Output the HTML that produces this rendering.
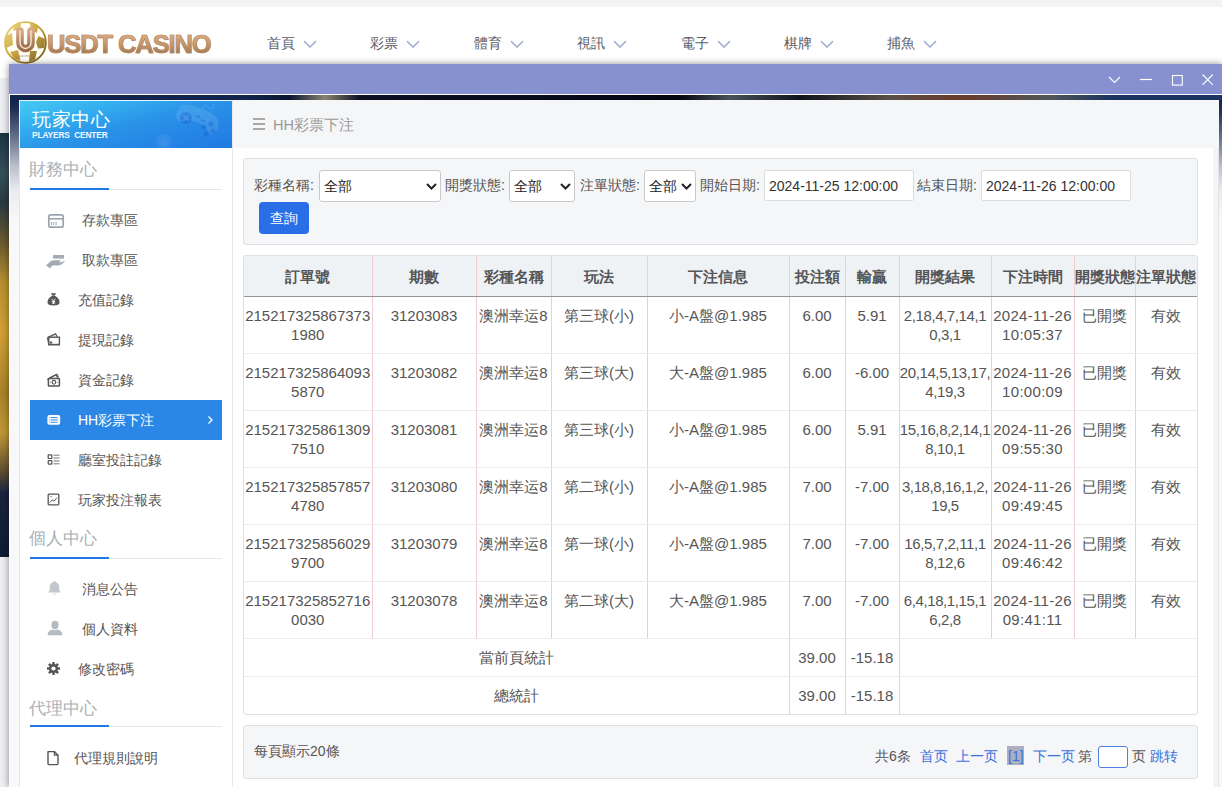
<!DOCTYPE html>
<html><head><meta charset="utf-8">
<style>
*{margin:0;padding:0;box-sizing:border-box}
html,body{width:1222px;height:787px;overflow:hidden;background:#fff;font-family:"Liberation Sans",sans-serif;color:#555}
.abs{position:absolute}
#topstrip{left:0;top:0;width:1222px;height:7px;background:#f3f3f3}
#leftpage{left:0;top:78px;width:9px;height:709px;background:#edeff2}
#casino{left:0;top:133px;width:9px;height:424px;background:linear-gradient(180deg,#1c3444 0px,#36505a 40px,#2a3a40 70px,#6a5a30 110px,#b89030 150px,#d0a035 200px,#a88228 260px,#c09838 300px,#5a4a30 340px,#1a2440 360px,#0f1b33 424px)}
.nav{top:34px;font-size:14px;color:#5c5c66;line-height:18px}
.nav svg{position:absolute;top:6px}
#logo{left:4px;top:21px;width:43px;height:43px}
#logotext{left:47px;top:29px;font-size:25.5px;font-weight:bold;letter-spacing:-1.1px;line-height:30px;-webkit-text-stroke:0.7px #b88a62;background:linear-gradient(180deg,#e2b890 0%,#cc9c72 45%,#a47b55 80%,#9a7450 100%);-webkit-background-clip:text;background-clip:text;color:transparent}
#modal{left:9px;top:64px;width:1213px;height:723px;box-shadow:0 0 7px rgba(0,0,0,.45)}
#titlebar{left:0;top:0;width:1213px;height:30px;background:#8791cf}
#modalbg{left:0;top:30px;width:1213px;height:693px;border-top:1px solid #fff;border-left:1px solid #fff;background:linear-gradient(180deg,#0f1f45 0px,#1e2d55 14px,#6d7690 45px,#b9bdca 70px,#e9ebef 95px,#f8f8fa 125px,#f8f8fa 100%)}
#band{left:10px;top:95px;width:1212px;height:5px;background:linear-gradient(90deg,#10244e 0px,#10244e 240px,#0a1530 280px,#8a8470 315px,#0c1024 350px,#06081a 600px,#05060f 670px,#4a525a 720px,#10141c 790px,#5a5048 880px,#6a3a2a 950px,#50565a 1040px,#1a3560 1100px,#1a3560 1212px)}
#panel{left:19px;top:100px;width:1200px;height:687px;background:#fff}
#sidebar{left:19px;top:100px;width:214px;height:687px;background:#fff;border-left:1px solid #e3e6ea;border-right:1px solid #e6e8ec}
#sbhead{left:19px;top:100px;width:213px;height:48px;border-top:1px solid #e8f4fb;border-left:1px solid #e8f4fb;background:linear-gradient(165deg,#45caf3 0%,#35b0ef 25%,#2a94e8 50%,#2688e6 70%,#217ae2 100%)}
.sbtitle{left:29px;font-size:17px;color:#a9b0b9;line-height:20px}
.uline{left:30px;width:192px;height:1px;background:#e3e5e8}
.uline i{position:absolute;left:0;top:-1px;width:79px;height:2px;background:#1f78e4}
.item{font-size:14px;line-height:16px;color:#555}
.ico{position:absolute}
#active{left:30px;top:400px;width:192px;height:40px;background:#2b87e5}
#crumb{left:232px;top:100px;width:987px;height:48px;background:#f5f6f8}
#rstrip{left:1213px;top:148px;width:6px;height:639px;background:#f3f4f6;border-right:1px solid #e2e4e8}
#filter{left:243px;top:158px;width:955px;height:87px;background:#f5f6f8;border:1px solid #dcdfe4;border-radius:3px}
.lbl{font-size:14px;color:#555;line-height:16px;top:177px}
.sel{top:170px;height:32px;background:#fff;border:1px solid #c9c9c9;border-radius:3px;font-size:14px;color:#222}
.sel span{position:absolute;left:4px;top:7px;line-height:16px}
.sel svg{position:absolute;top:12px}
.inp{top:170px;height:31px;background:#fff;border:1px solid #dcdcdc;border-radius:2px;font-size:14px;color:#333}
.inp span{position:absolute;left:4px;top:7px;line-height:16px}
#btn{left:259px;top:202px;width:50px;height:32px;background:#2a6ee7;border-radius:4px;color:#fff;font-size:14px;line-height:32px;text-align:center}
#tablewrap{left:243px;top:255px;width:955px;height:460px;border:1px solid #dcdfe4;border-radius:3px;overflow:hidden}
table{border-collapse:collapse;table-layout:fixed;position:absolute;left:0;top:0;width:953px}
th{background:#eff2f5;height:40px;font-size:15px;font-weight:bold;color:#555;border-left:1px solid #f2cdd0;border-bottom:1.5px solid #9c9293;white-space:nowrap;overflow:visible;padding:4px 0 0 0;text-align:center}
td{font-size:15px;color:#555;text-align:center;vertical-align:top;border-left:1px solid #f2cdd0;border-bottom:1px solid #ebebeb;padding:9px 0 0 0;line-height:19px;white-space:nowrap;height:57px}
th:first-child,td:first-child{border-left:none}
tr.sum td{height:38px;vertical-align:middle;padding:1px 0 0 0}
td.c8{letter-spacing:-0.4px}
td.c1{letter-spacing:0px}
td.c9{letter-spacing:0.3px}
#pager{left:243px;top:725px;width:955px;height:54px;background:#f5f6f8;border:1px solid #dcdfe4;border-radius:3px}
.pg{font-size:14px;line-height:16px;top:748px;color:#555}
.blue{color:#3b6fe0}
</style></head><body>
<div class="abs" id="topstrip"></div>
<div class="abs" id="leftpage"></div>
<div class="abs" id="casino"></div>

<!-- logo -->
<svg class="abs" id="logo" viewBox="0 0 43 43">
 <defs><linearGradient id="gold" x1="0" y1="0" x2="1" y2="1"><stop offset="0" stop-color="#f0d878"/><stop offset=".45" stop-color="#c9a230"/><stop offset="1" stop-color="#6a5010"/></linearGradient>
 <linearGradient id="ug" x1="0" y1="0" x2="0" y2="1"><stop offset="0" stop-color="#d8a684"/><stop offset="1" stop-color="#9c6e4a"/></linearGradient></defs>
 <circle cx="21.5" cy="21.5" r="20.4" fill="#fffef8" stroke="url(#gold)" stroke-width="1.8"/>
 <path d="M9 4.5 L17 2.5 L16 8 L9.5 10 Z M26 2 L34 5 L33 12 L27 9 Z M1.5 15 L8 12 L9 24 L2 27 Z M34.5 15 L41 18 L40.5 27 L34 27.5 L32 21 Z M6 31 L14 29 L16.5 39.5 L10 38 Z M26 30 L33 30 L31 38.5 L25 40.5 Z" fill="url(#gold)" opacity=".9"/>
 <path d="M16 10 V22 A5.5 5.5 0 0 0 27 22 V10" fill="none" stroke="url(#ug)" stroke-width="7.6" stroke-linecap="round"/>
 <path d="M16 10 V22 A5.5 5.5 0 0 0 27 22 V10" fill="none" stroke="#fbeee0" stroke-width="1.3" stroke-linecap="round"/>
 <text x="20" y="36" font-size="4.2" text-anchor="middle" fill="#b08a6a" font-family="Liberation Sans">casino</text>
</svg>
<div class="abs" id="logotext">USDT CASINO</div>

<!-- nav -->
<div class="abs nav" style="left:267px">首頁<svg style="left:35.5px" width="14" height="9" viewBox="0 0 14 9"><path d="M1 1.2 L7 7 L13 1.2" fill="none" stroke="#aab3d3" stroke-width="1.7"/></svg></div>
<div class="abs nav" style="left:370px">彩票<svg style="left:35.5px" width="14" height="9" viewBox="0 0 14 9"><path d="M1 1.2 L7 7 L13 1.2" fill="none" stroke="#aab3d3" stroke-width="1.7"/></svg></div>
<div class="abs nav" style="left:474px">體育<svg style="left:35.5px" width="14" height="9" viewBox="0 0 14 9"><path d="M1 1.2 L7 7 L13 1.2" fill="none" stroke="#aab3d3" stroke-width="1.7"/></svg></div>
<div class="abs nav" style="left:577px">視訊<svg style="left:35.5px" width="14" height="9" viewBox="0 0 14 9"><path d="M1 1.2 L7 7 L13 1.2" fill="none" stroke="#aab3d3" stroke-width="1.7"/></svg></div>
<div class="abs nav" style="left:681px">電子<svg style="left:35.5px" width="14" height="9" viewBox="0 0 14 9"><path d="M1 1.2 L7 7 L13 1.2" fill="none" stroke="#aab3d3" stroke-width="1.7"/></svg></div>
<div class="abs nav" style="left:784px">棋牌<svg style="left:35.5px" width="14" height="9" viewBox="0 0 14 9"><path d="M1 1.2 L7 7 L13 1.2" fill="none" stroke="#aab3d3" stroke-width="1.7"/></svg></div>
<div class="abs nav" style="left:887px">捕魚<svg style="left:35.5px" width="14" height="9" viewBox="0 0 14 9"><path d="M1 1.2 L7 7 L13 1.2" fill="none" stroke="#aab3d3" stroke-width="1.7"/></svg></div>

<!-- modal -->
<div class="abs" id="modal">
 <div class="abs" id="titlebar"></div>
 <div class="abs" id="modalbg"></div>
</div>
<svg class="abs" style="left:1100px;top:70px" width="122" height="22" viewBox="0 0 122 22">
 <path d="M9 7 L14.5 12.5 L20 7" fill="none" stroke="#fff" stroke-width="1.1"/>
 <path d="M40 9.5 H52" stroke="#fff" stroke-width="1.2"/>
 <rect x="72.5" y="5.5" width="9.8" height="9.6" fill="none" stroke="#fff" stroke-width="1.1"/>
 <path d="M102.5 4.5 L112.8 14.8 M112.8 4.5 L102.5 14.8" stroke="#fff" stroke-width="1.1"/>
</svg>

<div class="abs" id="band"></div>
<div class="abs" id="panel"></div>
<div class="abs" id="crumb"></div>
<div class="abs" id="rstrip"></div>

<!-- sidebar -->
<div class="abs" id="sidebar"></div>
<div class="abs" id="sbhead"></div>
<svg class="abs" style="left:150px;top:101px" width="82" height="47" viewBox="0 0 82 47">
 <g transform="translate(48 18) rotate(22) scale(0.82) translate(-47 -20)">
  <path d="M22 12 Q30 6 47 7 Q64 6 71 13 Q76 22 72 29 Q68 33 62 28 Q56 24 47 24 Q38 24 32 28 Q26 33 22 29 Q18 22 22 12 Z" fill="rgba(255,255,255,0.11)"/>
 </g>
 <circle cx="36" cy="17" r="6" fill="rgba(20,90,210,0.35)"/>
 <path d="M33 14 L39 20 M39 14 L33 20" stroke="rgba(255,255,255,0.15)" stroke-width="1.6"/>
 <path d="M46 14.5 L50 16.5 M51 18.5 L55 20.5" stroke="rgba(20,90,210,0.35)" stroke-width="1.6"/>
 <circle cx="54" cy="26" r="2.6" fill="rgba(20,90,210,0.35)"/>
 <circle cx="61" cy="23" r="2.6" fill="rgba(20,90,210,0.35)"/>
 <circle cx="56" cy="33" r="2.6" fill="rgba(20,90,210,0.35)"/>
 <circle cx="63" cy="30" r="2.6" fill="rgba(20,90,210,0.35)"/>
 <path d="M52 8 Q55 2 58 6 Q61 10 64 6 L62 2" fill="none" stroke="rgba(255,255,255,0.12)" stroke-width="1.2"/>
 <circle cx="14" cy="41" r="8" fill="rgba(255,255,255,0.06)"/>
 <circle cx="14" cy="42" r="4" fill="rgba(255,255,255,0.05)"/>
</svg>
<div class="abs" style="left:32px;top:109px;font-size:18.5px;color:#fff;line-height:21px;letter-spacing:0.5px">玩家中心</div>
<div class="abs" style="left:32px;top:130px;font-size:8.3px;font-weight:bold;color:#f4f9ff;line-height:10px;letter-spacing:-0.1px">PLAYERS&nbsp; CENTER</div>

<div class="abs sbtitle" style="top:160px">財務中心</div>
<div class="abs uline" style="top:189px"><i></i></div>

<div class="abs item" style="left:82px;top:212px">存款專區</div>
<div class="abs item" style="left:82px;top:252px">取款專區</div>
<div class="abs item" style="left:78px;top:292px">充值記錄</div>
<div class="abs item" style="left:78px;top:332px">提現記錄</div>
<div class="abs item" style="left:78px;top:372px">資金記錄</div>
<div class="abs" id="active"></div>
<div class="abs item" style="left:78px;top:412px;color:#fff">HH彩票下注</div>
<div class="abs item" style="left:78px;top:452px">廳室投註記錄</div>
<div class="abs item" style="left:78px;top:492px">玩家投注報表</div>

<div class="abs sbtitle" style="top:529px">個人中心</div>
<div class="abs uline" style="top:558px"><i></i></div>
<div class="abs item" style="left:82px;top:581px">消息公告</div>
<div class="abs item" style="left:82px;top:621px">個人資料</div>
<div class="abs item" style="left:78px;top:661px">修改密碼</div>

<div class="abs sbtitle" style="top:699px">代理中心</div>
<div class="abs uline" style="top:726px"><i></i></div>
<div class="abs item" style="left:74px;top:750px">代理規則說明</div>


<!-- sidebar icons -->
<svg class="abs" style="left:47px;top:213px" width="18" height="16" viewBox="0 0 18 16"><rect x="1.8" y="1.8" width="14.4" height="12.4" rx="2" fill="none" stroke="#9ca5ae" stroke-width="1.7"/><path d="M1.8 5.8 H16.2" stroke="#9ca5ae" stroke-width="1.6"/><path d="M4.5 9 V12 M6.8 9 V12 M9.1 9 V12" stroke="#9ca5ae" stroke-width="1"/></svg>
<svg class="abs" style="left:46px;top:254px" width="20" height="15" viewBox="0 0 20 15"><rect x="7" y="1" width="11" height="3.6" fill="#a2abb3"/><path d="M1 10.8 L4.2 7.6 Q6 6.2 8.5 6.2 H13.6 Q15 6.4 14.2 7.8 Q13.6 8.5 12 8.5 H9.6 H13.5 Q16.5 8.3 18.8 6.4 Q19 7.5 16.8 9.6 Q14.5 11.6 11.5 11.6 H6.2 L4.8 13.6 Z" fill="#a2abb3"/><path d="M0.6 10.6 L4.6 13.9" stroke="#a2abb3" stroke-width="1.6"/></svg>
<svg class="abs" style="left:46px;top:292px" width="15" height="15" viewBox="0 0 15 15"><path d="M5 1.2 H10 L8.8 3.5 H6.2 Z" fill="#555"/><path d="M6 3.8 H9 Q13.5 6.5 13.5 10.2 Q13.5 13.5 7.5 13.5 Q1.5 13.5 1.5 10.2 Q1.5 6.5 6 3.8 Z" fill="#555"/><path d="M5.6 6.8 L7.5 9 L9.4 6.8 M7.5 9 V12 M5.8 9.6 H9.2 M5.8 11 H9.2" fill="none" stroke="#fff" stroke-width="0.9"/></svg>
<svg class="abs" style="left:46px;top:332px" width="15" height="15" viewBox="0 0 15 15"><path d="M1.5 5.6 L9.5 1.8 L11.2 4.8" fill="none" stroke="#555" stroke-width="1.3"/><rect x="2.8" y="5.2" width="10.6" height="7.6" fill="none" stroke="#555" stroke-width="1.4"/><path d="M1.5 5.6 L2.8 12.8" stroke="#555" stroke-width="1.2"/><rect x="4" y="9.5" width="2.2" height="2" fill="#555"/><path d="M4 12.3 H13" stroke="#555" stroke-width="1"/></svg>
<svg class="abs" style="left:46px;top:373px" width="15" height="15" viewBox="0 0 15 15"><path d="M1.4 6.6 L10 1.8 L11.8 5" fill="none" stroke="#555" stroke-width="1.3"/><path d="M3.2 4.9 L11 1 L12.6 4" fill="none" stroke="#555" stroke-width="1"/><rect x="2.4" y="5.6" width="11" height="7.4" rx=".6" fill="none" stroke="#555" stroke-width="1.5"/><ellipse cx="7.9" cy="9.3" rx="1.8" ry="1.9" fill="none" stroke="#555" stroke-width="1.1"/><path d="M4.2 9.3 H5 M10.8 9.3 H11.6" stroke="#555" stroke-width="1.1"/></svg>
<svg class="abs" style="left:47px;top:414px" width="14" height="12" viewBox="0 0 14 12"><rect x="0.4" y="1" width="12.8" height="9.8" rx="2" fill="#fff"/><path d="M3.6 3.6 H10.6 M3.6 5.9 H10.6 M3.6 8.2 H10.6" stroke="#2b87e5" stroke-width="1"/><path d="M1.9 3.6 H2.6 M1.9 5.9 H2.6 M1.9 8.2 H2.6" stroke="#2b87e5" stroke-width="1"/></svg>
<svg class="abs" style="left:47px;top:454px" width="14" height="12" viewBox="0 0 14 12"><rect x="1.2" y="0.9" width="3.6" height="3.6" rx=".6" fill="none" stroke="#555" stroke-width="1.2"/><rect x="1.2" y="6.6" width="3.6" height="3.6" rx=".6" fill="none" stroke="#555" stroke-width="1.2"/><path d="M6.4 1.2 H12.5 M6.4 4 H12.5 M6.4 7 H12.5 M6.4 9.8 H12.5" stroke="#777" stroke-width="1"/></svg>
<svg class="abs" style="left:47px;top:493px" width="13" height="13" viewBox="0 0 13 13"><rect x="1.2" y="1.2" width="10.6" height="10.6" rx=".8" fill="none" stroke="#555" stroke-width="1.3"/><path d="M3 9.6 L5.2 6.8 L7 8.2 L10 4.6 M3.6 3 L4.6 4.2" fill="none" stroke="#555" stroke-width="1"/></svg>
<svg class="abs" style="left:46px;top:580px" width="17" height="16" viewBox="0 0 17 16"><path d="M8.5 1 Q9.6 1 9.7 2.2 Q13 3 13.2 6.8 V10.2 L15 12.4 H2 L3.8 10.2 V6.8 Q4 3 7.3 2.2 Q7.4 1 8.5 1 Z" fill="#c3c8ce"/><path d="M7 13.6 Q8.5 15.6 10 13.6 Z" fill="#c3c8ce"/></svg>
<svg class="abs" style="left:46px;top:620px" width="18" height="16" viewBox="0 0 18 16"><ellipse cx="9" cy="5" rx="3.6" ry="4.2" fill="#b5bbc2"/><path d="M1.5 15.2 Q2 10.8 6.4 9.6 Q9 10.8 11.6 9.6 Q16 10.8 16.5 15.2 Z" fill="#b5bbc2"/></svg>
<svg class="abs" style="left:46px;top:661px" width="15" height="15" viewBox="0 0 15 15"><g fill="#555"><circle cx="7.5" cy="7.5" r="4.6"/><rect x="6.3" y="1" width="2.4" height="13"/><rect x="6.3" y="1" width="2.4" height="13" transform="rotate(45 7.5 7.5)"/><rect x="6.3" y="1" width="2.4" height="13" transform="rotate(90 7.5 7.5)"/><rect x="6.3" y="1" width="2.4" height="13" transform="rotate(135 7.5 7.5)"/></g><circle cx="7.5" cy="7.5" r="2.1" fill="#fff"/></svg>
<svg class="abs" style="left:46px;top:750px" width="14" height="16" viewBox="0 0 14 16"><path d="M2 1.6 H8.4 L12 5.2 V13.6 Q12 14.6 11 14.6 H3 Q2 14.6 2 13.6 Z" fill="none" stroke="#555" stroke-width="1.4" stroke-linejoin="round"/><path d="M8.4 1.6 V5.2 H12" fill="none" stroke="#555" stroke-width="1.2"/></svg>
<svg class="abs" style="left:205px;top:414px" width="10" height="12" viewBox="0 0 10 12"><path d="M3.5 2.5 L7 6 L3.5 9.5" fill="none" stroke="#fff" stroke-width="1.3"/></svg>

<!-- breadcrumb -->
<svg class="abs" style="left:253px;top:118px" width="12" height="12" viewBox="0 0 12 12"><path d="M0 1 H12 M0 6 H12 M0 11 H12" stroke="#8f8f8f" stroke-width="1.6"/></svg>
<div class="abs" style="left:273px;top:117px;font-size:14.6px;color:#999;line-height:17px">HH彩票下注</div>

<!-- filter -->
<div class="abs" id="filter"></div>
<div class="abs lbl" style="left:254px">彩種名稱:</div>
<div class="abs sel" style="left:319px;width:122px"><span>全部</span><svg style="left:106px" width="11" height="7" viewBox="0 0 11 7"><path d="M1 1 L5.5 5.5 L10 1" fill="none" stroke="#222" stroke-width="2"/></svg></div>
<div class="abs lbl" style="left:445px">開獎狀態:</div>
<div class="abs sel" style="left:509px;width:66px"><span>全部</span><svg style="left:50px" width="11" height="7" viewBox="0 0 11 7"><path d="M1 1 L5.5 5.5 L10 1" fill="none" stroke="#222" stroke-width="2"/></svg></div>
<div class="abs lbl" style="left:580px">注單狀態:</div>
<div class="abs sel" style="left:644px;width:52px"><span>全部</span><svg style="left:36px" width="11" height="7" viewBox="0 0 11 7"><path d="M1 1 L5.5 5.5 L10 1" fill="none" stroke="#222" stroke-width="2"/></svg></div>
<div class="abs lbl" style="left:700px">開始日期:</div>
<div class="abs inp" style="left:764px;width:150px"><span>2024-11-25 12:00:00</span></div>
<div class="abs lbl" style="left:917px">結束日期:</div>
<div class="abs inp" style="left:981px;width:150px"><span>2024-11-26 12:00:00</span></div>
<div class="abs" id="btn">查詢</div>

<!-- table -->
<div class="abs" id="tablewrap">
<table>
<colgroup><col style="width:128px"><col style="width:104px"><col style="width:75px"><col style="width:96px"><col style="width:142px"><col style="width:56px"><col style="width:54px"><col style="width:92px"><col style="width:83px"><col style="width:61px"><col style="width:62px"></colgroup>
<tr><th>訂單號</th><th>期數</th><th>彩種名稱</th><th>玩法</th><th>下注信息</th><th>投注額</th><th>輸贏</th><th>開獎結果</th><th>下注時間</th><th>開獎狀態</th><th>注單狀態</th></tr>
<tr><td class="c1">215217325867373<br>1980</td><td>31203083</td><td>澳洲幸运8</td><td>第三球(小)</td><td>小-A盤@1.985</td><td>6.00</td><td>5.91</td><td class="c8">2,18,4,7,14,1<br>0,3,1</td><td class="c9">2024-11-26<br>10:05:37</td><td>已開獎</td><td>有效</td></tr>
<tr><td class="c1">215217325864093<br>5870</td><td>31203082</td><td>澳洲幸运8</td><td>第三球(大)</td><td>大-A盤@1.985</td><td>6.00</td><td>-6.00</td><td class="c8">20,14,5,13,17,<br>4,19,3</td><td class="c9">2024-11-26<br>10:00:09</td><td>已開獎</td><td>有效</td></tr>
<tr><td class="c1">215217325861309<br>7510</td><td>31203081</td><td>澳洲幸运8</td><td>第三球(小)</td><td>小-A盤@1.985</td><td>6.00</td><td>5.91</td><td class="c8">15,16,8,2,14,1<br>8,10,1</td><td class="c9">2024-11-26<br>09:55:30</td><td>已開獎</td><td>有效</td></tr>
<tr><td class="c1">215217325857857<br>4780</td><td>31203080</td><td>澳洲幸运8</td><td>第二球(小)</td><td>小-A盤@1.985</td><td>7.00</td><td>-7.00</td><td class="c8">3,18,8,16,1,2,<br>19,5</td><td class="c9">2024-11-26<br>09:49:45</td><td>已開獎</td><td>有效</td></tr>
<tr><td class="c1">215217325856029<br>9700</td><td>31203079</td><td>澳洲幸运8</td><td>第一球(小)</td><td>小-A盤@1.985</td><td>7.00</td><td>-7.00</td><td class="c8">16,5,7,2,11,1<br>8,12,6</td><td class="c9">2024-11-26<br>09:46:42</td><td>已開獎</td><td>有效</td></tr>
<tr><td class="c1">215217325852716<br>0030</td><td>31203078</td><td>澳洲幸运8</td><td>第二球(大)</td><td>大-A盤@1.985</td><td>7.00</td><td>-7.00</td><td class="c8">6,4,18,1,15,1<br>6,2,8</td><td class="c9">2024-11-26<br>09:41:11</td><td>已開獎</td><td>有效</td></tr>
<tr class="sum"><td colspan="5">當前頁統計</td><td>39.00</td><td>-15.18</td><td colspan="4"></td></tr>
<tr class="sum"><td colspan="5">總統計</td><td>39.00</td><td>-15.18</td><td colspan="4"></td></tr>
</table>
</div>

<!-- pager -->
<div class="abs" id="pager"></div>
<div class="abs pg" style="left:254px;top:743px">每頁顯示20條</div>
<div class="abs pg" style="left:875px">共6条</div>
<div class="abs pg blue" style="left:920px">首页</div>
<div class="abs pg blue" style="left:956px">上一页</div>
<div class="abs" style="left:1007px;top:746px;width:17px;height:19px;background:#abafc1"></div>
<div class="abs pg blue" style="left:1008px">[1]</div>
<div class="abs pg blue" style="left:1033px">下一页</div>
<div class="abs pg" style="left:1078px">第</div>
<div class="abs" style="left:1098px;top:746px;width:30px;height:22px;border:1px solid #4c7fe2;border-radius:3px;background:#fff"></div>
<div class="abs pg" style="left:1132px">页</div>
<div class="abs pg blue" style="left:1150px">跳转</div>
</body></html>
